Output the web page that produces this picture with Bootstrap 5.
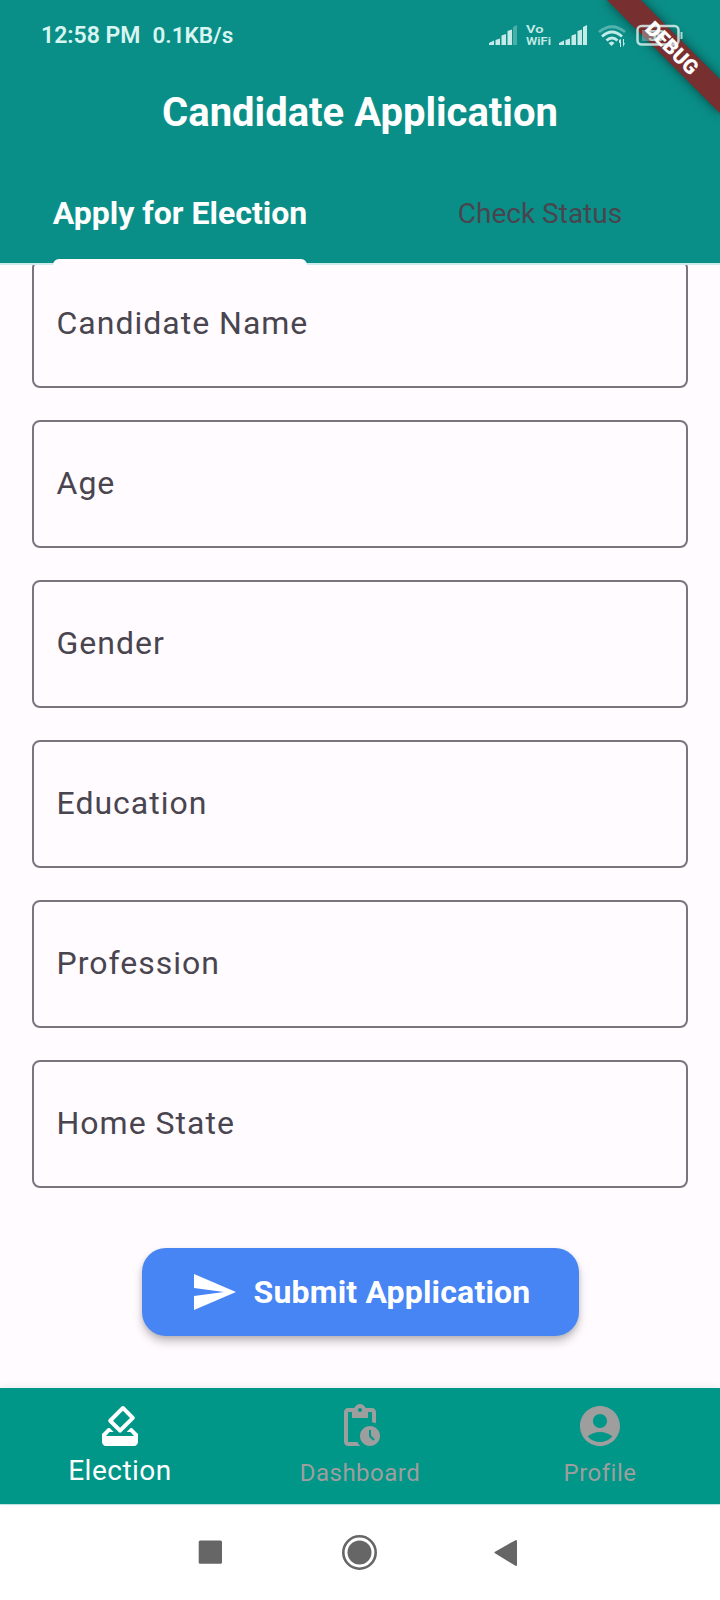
<!DOCTYPE html>
<html lang="en">
<head>
<meta charset="utf-8">
<meta name="viewport" content="width=device-width, initial-scale=1">
<title>Candidate Application</title>
<link href="https://cdn.jsdelivr.net/npm/bootstrap@5.3.0/dist/css/bootstrap.min.css" rel="stylesheet">
<style>
body{font-family:Roboto,"Liberation Sans",sans-serif;background:#fffbff;color:#49454f;width:720px;height:1600px}
svg{display:block;flex:none}
.app-head{height:265px;background:#0a8f88;border-bottom:2px solid #cdebec}
.status-line{height:70px;padding:0 39px 0 41px;color:#d9f5f2;font-size:22.5px;font-weight:600;line-height:1;z-index:2}
.clock{font-size:23px;margin-right:12px}
.app-title{height:84px;padding-top:2px;font-size:40px;font-weight:700;line-height:1}
.tab-row{height:109px}
.tab-row .nav-link{font-size:28px;line-height:1;color:#49454f;padding:11px 0 0;border:0;border-radius:0}
.tab-row .nav-link.active{padding-top:9px;font-size:32px;font-weight:700;color:#fff;background:none}
.tab-mark{left:0;right:0;bottom:-2px;height:6px;background:#fffbff;border-radius:6px 6px 0 0}
.form-area{height:1123px}
.field{height:128px;border:2px solid #79747e;border-radius:8px;padding:0 22.5px 2px;font-size:32px;letter-spacing:1px;line-height:1;flex:none}
.stack{gap:32px;margin-top:-5px}
.send-btn{width:437px;height:88px;margin-top:60px;border:0;border-radius:24px;background:#4785f5;font-size:32px;font-weight:700;letter-spacing:.18px;line-height:1;gap:16px;box-shadow:0 6px 10px rgba(0,0,0,.22),0 2px 4px rgba(0,0,0,.1)}
.tab-bar{height:116px;background:#009688;box-shadow:0 -1px 8px rgba(0,0,0,.08)}
.tab-bar .nav-link{padding:14px 0 0;color:#9e9e9e;font-size:24px;letter-spacing:.5px;line-height:1}
.tab-bar .nav-link.active{color:#fff;font-size:28px}
.tab-bar span{margin-top:11px}
.tab-bar .active span{margin-top:7px}
.sys-bar{height:96px;background:#fff;border-top:1px solid #c4e9e6}
.ribbon{left:640px;top:56px;width:160px;height:24px;transform-origin:80px -56px;transform:rotate(45deg);color:#fff;font-size:20.4px;font-weight:900;line-height:24px;z-index:3}
.ribbon-band{background:#772f30;box-shadow:0 0 12px rgba(0,0,0,.5);z-index:1}
</style>
</head>
<body class="d-flex flex-column overflow-hidden position-relative">
<header class="app-head flex-shrink-0">
  <div class="status-line position-relative d-flex align-items-center justify-content-between">
    <div class="d-flex align-items-center"><span class="clock">12:58 PM</span><span>0.1KB/s</span></div>
    <svg width="194" height="34" viewBox="487 18 194 34" fill="#c4ebe7" overflow="visible">
      <path d="M489 45v-2l5-2.500v4.500zM495.500 40l4.500-1.500v6.500h-4.500zM501.500 35.500l4.500-1.500v11h-4.500zM507.500 31l4.500-1.500v15.500h-4.500z"/>
      <path d="M513 27l4-2v20h-4z" opacity=".35"/>
      <g font-family="Roboto" font-size="11.500" font-weight="600"><text x="526" y="33" textLength="17.500" lengthAdjust="spacingAndGlyphs">Vo</text><text x="526" y="45.300" textLength="25" lengthAdjust="spacingAndGlyphs">WiFi</text></g>
      <path d="M559 45v-2l5-2.500v4.500zM565.500 40l4.500-1.500v6.500h-4.500zM571.500 35.500l4.500-1.500v11h-4.500zM577.500 31l4.500-1.500v15.500h-4.500zM583 27l4-2v20h-4z"/>
      <g fill="none" stroke="#c4ebe7" stroke-width="2.800"><path d="M599 32Q612 21.500 625 32" opacity=".4"/><path d="M602 36.500Q612 27.500 622 36.500M606.500 40.500Q612 35.500 617.500 40.500"/></g>
      <path d="M608.500 43q3.500-3 6 0l-3 3zM619 40l2-1v8h-1v-4h-1zM623 39h1v4h1l-2 4z"/>
      <g opacity=".85"><rect x="637.500" y="26" width="41" height="18.500" rx="4" fill="none" stroke="#d9efed" stroke-width="2.500"/>
      <path d="M642 30h19v11h-19z" opacity=".4"/><path d="M680.500 32h2v7h-2z"/>
      <text x="648" y="41" font-size="15" font-family="Roboto" font-weight="700">59</text></g>
    </svg>
  </div>
  <h1 class="app-title d-flex align-items-center justify-content-center text-white m-0">Candidate Application</h1>
  <nav class="tab-row nav">
    <div class="nav-item d-flex justify-content-center w-50"><a class="nav-link active d-flex align-items-center position-relative" href="#">Apply for Election<span class="tab-mark position-absolute"></span></a></div>
    <div class="nav-item d-flex justify-content-center w-50"><a class="nav-link d-flex align-items-center" href="#">Check Status</a></div>
  </nav>
</header>
<main class="form-area flex-shrink-0 overflow-hidden">
  <div class="stack d-flex flex-column px-4 mx-2">
    <div class="field d-flex align-items-center">Candidate Name</div>
    <div class="field d-flex align-items-center">Age</div>
    <div class="field d-flex align-items-center">Gender</div>
    <div class="field d-flex align-items-center">Education</div>
    <div class="field d-flex align-items-center">Profession</div>
    <div class="field d-flex align-items-center">Home State</div>
  </div>
  <button class="send-btn btn btn-primary d-flex align-items-center justify-content-center mx-auto p-0" type="button">
    <svg width="48" height="48" viewBox="0 0 24 24" fill="#fff"><path d="M2.010 21L23 12 2.010 3 2 10l15 2-15 2z"/></svg>
    <span>Submit Application</span>
  </button>
</main>
<nav class="tab-bar nav nav-justified flex-shrink-0 position-relative">
  <a class="nav-link active d-flex flex-column align-items-center" href="#">
    <svg width="48" height="48" viewBox="0 0 24 24" fill="currentColor"><path d="M18 13h-.68l-2 2h1.910L19 17H5l1.780-2h2.050l-2-2H6l-3 3v4c0 1.100.89 2 1.990 2H19c1.100 0 2-.89 2-2v-4l-3-3zm-1-5.050l-4.950 4.950-3.540-3.540 4.950-4.950L17 7.950zm-4.240-5.660L6.390 8.660c-.39.39-.39 1.020 0 1.410l4.950 4.950c.39.39 1.020.39 1.410 0l6.360-6.360c.39-.39.39-1.020 0-1.410L14.160 2.300c-.38-.4-1.010-.4-1.400-.01z"/></svg>
    <span>Election</span>
  </a>
  <a class="nav-link d-flex flex-column align-items-center" href="#">
    <svg width="48" height="48" viewBox="0 0 24 24" fill="currentColor"><path d="M17 12c-2.760 0-5 2.240-5 5s2.240 5 5 5 5-2.240 5-5-2.240-5-5-5zm1.650 7.350L16.500 17.200V14h1v2.790l1.850 1.850-.7.710zM18 3h-3.180C14.400 1.840 13.300 1 12 1s-2.400.84-2.820 2H6c-1.100 0-2 .9-2 2v15c0 1.100.9 2 2 2h6.110c-.59-.57-1.070-1.250-1.420-2H6V5h2v3h8V5h2v5.080c.71.1 1.380.31 2 .6V5c0-1.100-.9-2-2-2zm-6 2c-.55 0-1-.45-1-1s.45-1 1-1 1 .45 1 1-.45 1-1 1z"/></svg>
    <span>Dashboard</span>
  </a>
  <a class="nav-link d-flex flex-column align-items-center" href="#">
    <svg width="48" height="48" viewBox="0 0 24 24" fill="currentColor"><path d="M12 2C6.480 2 2 6.480 2 12s4.480 10 10 10 10-4.480 10-10S17.520 2 12 2zM12 6c1.930 0 3.500 1.570 3.500 3.500S13.930 13 12 13s-3.500-1.570-3.500-3.500S10.070 6 12 6zM12 20c-2.030 0-4.430-.82-6.140-2.880C7.550 15.800 9.680 15 12 15s4.450.8 6.140 2.120C16.430 19.180 14.030 20 12 20z"/></svg>
    <span>Profile</span>
  </a>
</nav>
<footer class="sys-bar flex-shrink-0">
  <svg width="720" height="95" viewBox="0 1505 720 95" fill="#666">
    <rect x="198.700" y="1540.500" width="23.300" height="23.300" rx="1.500"/>
    <circle cx="359.500" cy="1552.500" r="12"/><circle cx="359.500" cy="1552.500" r="16.200" fill="none" stroke="#666" stroke-width="2.600"/>
    <path d="M495.500 1552.500L516 1541v24z" stroke="#666" stroke-width="2" stroke-linejoin="round"/>
  </svg>
</footer>
<div class="ribbon ribbon-band position-absolute"></div>
<div class="ribbon position-absolute text-center">DEBUG</div>
<script src="https://cdn.jsdelivr.net/npm/bootstrap@5.3.0/dist/js/bootstrap.bundle.min.js"></script>
</body>
</html>
